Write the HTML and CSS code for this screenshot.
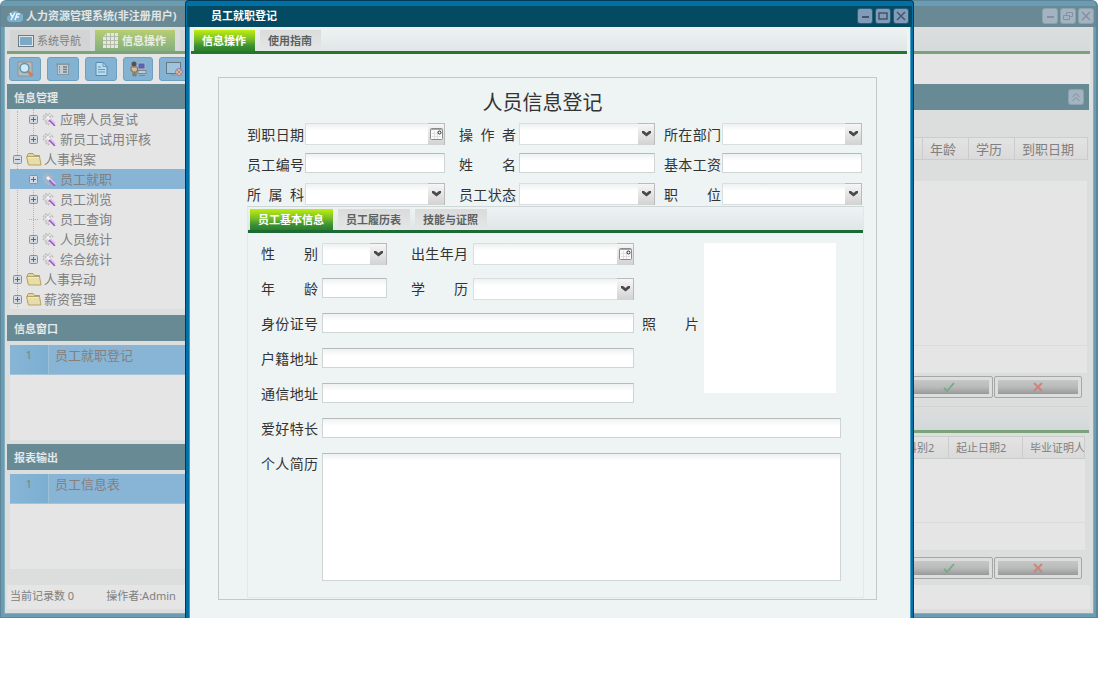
FILE: index.html
```html
<!DOCTYPE html>
<html lang="zh-CN">
<head>
    <meta charset="UTF-8">
    <meta name="viewport" content="width=device-width, initial-scale=1.0">
    <title>人力资源管理系统</title>
    <link rel="stylesheet" href="styles.css">
</head>
<body>
    <!-- shared icons -->
    <svg class="sprite" aria-hidden="true">
        <symbol id="plus" viewBox="0 0 9 9"><rect x=".5" y=".5" width="8" height="8" rx="1" fill="#d3d9e2" stroke="#8791a5"/><path d="M2 4.500h5M4.500 2v5" stroke="#5c6880"/></symbol>
        <symbol id="minus" viewBox="0 0 9 9"><rect x=".5" y=".5" width="8" height="8" rx="1" fill="#d3d9e2" stroke="#8791a5"/><path d="M2 4.500h5" stroke="#5c6880"/></symbol>
        <symbol id="folder" viewBox="0 0 16 13"><path d="M1.500 9.500V2l1-1.500h4.500l1.500 2h5v2.500" fill="#e0d6a0" stroke="#b09a68"/><path d="M.5 3.500h13l1.500 8.500H2.500z" fill="#e6dea8" stroke="#b8a368"/><path d="M2 4.500h11" stroke="#f0ead0"/></symbol>
        <symbol id="wand" viewBox="0 0 14 14"><path d="M1 5l4-4M1 8l7-7M3 10l7-7M4 12l3-3M6 13l2-2M10 5l1-1" stroke="#b9b9b9" stroke-width="1.500" stroke-dasharray="2 1"/><path d="M5 5l3 3" stroke="#f2f2f2" stroke-width="3"/><path d="M8 7l5 5" stroke="#dfbcf0" stroke-width="2"/><path d="M7 8l6 6" stroke="#9a50c4" stroke-width="1.500"/></symbol>
        <symbol id="arrow" viewBox="0 0 9 6"><path d="M0 0h2l2.500 2L7 0h2v2L4.500 5.500 0 2z" fill="#4a4a4a"/></symbol>
        <symbol id="calendar" viewBox="0 0 13 12"><rect x=".5" y=".5" width="12" height="11" rx="1" fill="#fafafa" stroke="#8a8a8a"/><path d="M1 1.500h11" stroke="#a8a8a8"/><path d="M4.500 3v8M7.500 3v8M2 5.500h9M2 8.500h9" stroke="#e0e0e0"/><circle cx="9.500" cy="4.500" r="1.500" fill="#fff" stroke="#222"/></symbol>
        <symbol id="check" viewBox="0 0 12 10"><path d="M1 6l3 3 7-8" fill="none" stroke="#79aa87" stroke-width="1.800"/></symbol>
        <symbol id="cross" viewBox="0 0 12 10"><path d="M2 1l8 8M10 1L2 9" stroke="#cf8379" stroke-width="1.800"/></symbol>
        <symbol id="win-min" viewBox="0 0 14 14"><path d="M4 8h7" stroke="currentColor" stroke-width="2"/></symbol>
        <symbol id="win-max" viewBox="0 0 14 14"><rect x="3" y="4" width="8" height="6" fill="none" stroke="currentColor" stroke-width="1.500"/></symbol>
        <symbol id="win-restore" viewBox="0 0 14 14"><path d="M5.500 6V3.500h6v4H9M2.500 6.500h6v4h-6z" fill="none" stroke="currentColor"/></symbol>
        <symbol id="win-close" viewBox="0 0 14 14"><path d="M3 3l8 8M11 3l-8 8" stroke="currentColor" stroke-width="1.500"/></symbol>
        <symbol id="collapse" viewBox="0 0 14 14"><path d="M3.500 7L7 3.500 10.500 7M3.500 11L7 7.500 10.500 11" fill="none" stroke="currentColor"/></symbol>
    </svg>

    <div class="desktop">
        <!-- main window -->
        <div class="app">
            <header class="titlebar">
                <svg class="logo" width="16" height="14" viewBox="0 0 16 14"><path d="M4 13a3.500 3.500 0 0 1-1-7 5 5 0 0 1 9-2 4.500 4.500 0 0 1 1 9z" fill="#7ab0d2"/><path d="M3 4l2.500 4M8 3.500L4 11M8 11l2-6h3M9 8h3" fill="none" stroke="#eef4f7" stroke-width="1.500"/></svg>
                <span class="titlebar-text">人力资源管理系统(非注册用户)</span>
                <div class="win-buttons">
                    <button type="button" aria-label="最小化"><svg><use href="#win-min"/></svg></button>
                    <button type="button" aria-label="还原"><svg><use href="#win-restore"/></svg></button>
                    <button type="button" aria-label="关闭"><svg><use href="#win-close"/></svg></button>
                </div>
            </header>

            <div class="app-inner">
                <nav class="tabs app-tabs">
                    <button type="button" class="tab"><svg width="16" height="12" viewBox="0 0 16 12"><rect x=".5" y=".5" width="15" height="11" fill="#dfe5e8" stroke="#6f7b84"/><rect x="2" y="2" width="12" height="8" fill="#7da9c6"/></svg>系统导航</button>
                    <button type="button" class="tab active"><svg width="15" height="15" viewBox="0 0 15 15"><path d="M4 0h11v15H0V4z" fill="#e3e8dd"/><path d="M3.500 1v14M7.500 0v15M11.500 0v15M0 3.500h15M0 7.500h15M0 11.500h15" stroke="#b3bcaa"/></svg>信息操作</button>
                    <button type="button" class="tab" aria-label="更多"></button>
                </nav>

                <div class="toolbar">
                    <button type="button" aria-label="查找"><svg width="17" height="17" viewBox="0 0 17 17"><path d="M1 1h14v14H1z" fill="#b9bcbc" stroke="#8e9494"/><circle cx="7.500" cy="7" r="4.500" fill="#d0eaf3" stroke="#5f93ab" stroke-width="1.500"/><path d="M11 10.500l4.500 4.500" stroke="#cf8058" stroke-width="3"/></svg></button>
                    <button type="button" aria-label="列表"><svg width="14" height="14" viewBox="0 0 14 14"><path d="M0 1h14v3H0z" fill="#8f9fa8"/><rect x="1.500" y="2.500" width="11" height="10" fill="#c2ced4" stroke="#8b979e"/><path d="M3 5h1M3 7.500h1M3 10h1M7 5h4M7 7.500h4M7 10h4" stroke="#6d7f89" stroke-width="1.500"/></svg></button>
                    <button type="button" aria-label="文档"><svg width="13" height="14" viewBox="0 0 13 14"><path d="M1 .5h7l4 4v9H1z" fill="#bbdcee" stroke="#568bad"/><path d="M8 .5v4h4M3 5h3M3 7.500h7M3 10h7" fill="none" stroke="#5e9ac1"/></svg></button>
                    <button type="button" aria-label="人员"><svg width="17" height="16" viewBox="0 0 17 16"><path d="M8 2h7v6H8z" fill="#5865ae" stroke="#a7b3d5"/><path d="M8 9.500h8v3H8zM9 14.500h6" fill="#c3cbd0" stroke="#7f878b"/><circle cx="4" cy="3" r="2.500" fill="#5b504c"/><path d="M1 6h6l1 4H6v5H5v-4H4v4H3v-5H1z" fill="#d9bb91" stroke="#827052"/></svg></button>
                    <button type="button" aria-label="显示"><svg width="18" height="15" viewBox="0 0 18 15"><rect x=".5" y=".5" width="14" height="11" fill="#9ec5dd" stroke="#69777e"/><path d="M4 13h6" stroke="#8b989e"/><circle cx="13" cy="10" r="3.500" fill="#d9c184" stroke="#8f78bd"/><path d="M11 8l4 4M15 8l-4 4" stroke="#b7809c" fill="none"/></svg></button>
                </div>

                <div class="app-body">
                    <aside class="sidebar">
                        <h2 class="section-title">信息管理</h2>
                        <ul class="tree">
                            <li class="sub">
                                <ul>
                                    <li><a href="#"><svg class="exp"><use href="#plus"/></svg><svg class="wand"><use href="#wand"/></svg>应聘人员复试</a></li>
                                    <li><a href="#"><svg class="exp"><use href="#plus"/></svg><svg class="wand"><use href="#wand"/></svg>新员工试用评核</a></li>
                                </ul>
                            </li>
                            <li><a href="#"><svg class="exp"><use href="#minus"/></svg><svg class="folder"><use href="#folder"/></svg>人事档案</a>
                                <ul>
                                    <li class="selected"><a href="#"><svg class="exp"><use href="#plus"/></svg><svg class="wand"><use href="#wand"/></svg>员工就职</a></li>
                                    <li><a href="#"><svg class="exp"><use href="#plus"/></svg><svg class="wand"><use href="#wand"/></svg>员工浏览</a></li>
                                    <li><a href="#"><span class="exp leaf"></span><svg class="wand"><use href="#wand"/></svg>员工查询</a></li>
                                    <li><a href="#"><svg class="exp"><use href="#plus"/></svg><svg class="wand"><use href="#wand"/></svg>人员统计</a></li>
                                    <li><a href="#"><svg class="exp"><use href="#plus"/></svg><svg class="wand"><use href="#wand"/></svg>综合统计</a></li>
                                </ul>
                            </li>
                            <li><a href="#"><svg class="exp"><use href="#plus"/></svg><svg class="folder"><use href="#folder"/></svg>人事异动</a></li>
                            <li><a href="#"><svg class="exp"><use href="#plus"/></svg><svg class="folder"><use href="#folder"/></svg>薪资管理</a></li>
                        </ul>

                        <h2 class="section-title">信息窗口</h2>
                        <div class="list">
                            <div class="list-row"><span class="list-no">1</span><span class="list-name">员工就职登记</span></div>
                        </div>

                        <h2 class="section-title">报表输出</h2>
                        <div class="list">
                            <div class="list-row"><span class="list-no">1</span><span class="list-name">员工信息表</span></div>
                        </div>
                    </aside>

                    <main class="content">
                        <div class="section-title content-title">
                            <button type="button" class="collapse-btn" aria-label="收起"><svg><use href="#collapse"/></svg></button>
                        </div>
                        <table class="grid-head staff-head">
                            <tr><th></th><th class="col-age">年龄</th><th class="col-edu">学历</th><th class="col-date">到职日期</th></tr>
                        </table>
                        <div class="grid-body staff-body"></div>
                        <div class="grid-foot"></div>
                        <div class="actions">
                            <button type="button" aria-label="确定"><span><svg><use href="#check"/></svg></span></button>
                            <button type="button" aria-label="取消"><span><svg><use href="#cross"/></svg></span></button>
                        </div>
                        <div class="strip"></div>
                        <table class="grid-head school-head">
                            <tr><th></th><th class="col-dept">科别2</th><th class="col-range">起止日期2</th><th class="col-witness">毕业证明人</th></tr>
                        </table>
                        <div class="grid-body school-body"></div>
                        <div class="grid-foot"></div>
                        <div class="actions">
                            <button type="button" aria-label="确定"><span><svg><use href="#check"/></svg></span></button>
                            <button type="button" aria-label="取消"><span><svg><use href="#cross"/></svg></span></button>
                        </div>
                    </main>
                </div>

                <footer class="status">
                    <span>当前记录数 0</span>
                    <span>操作者:Admin</span>
                </footer>
            </div>
        </div>

        <!-- dialog window -->
        <section class="dialog">
            <header class="titlebar">
                <span class="titlebar-text">员工就职登记</span>
                <div class="win-buttons">
                    <button type="button" aria-label="最小化"><svg><use href="#win-min"/></svg></button>
                    <button type="button" aria-label="最大化"><svg><use href="#win-max"/></svg></button>
                    <button type="button" aria-label="关闭"><svg><use href="#win-close"/></svg></button>
                </div>
            </header>

            <div class="dialog-inner">
                <nav class="tabs dialog-tabs">
                    <button type="button" class="tab active">信息操作</button>
                    <button type="button" class="tab">使用指南</button>
                </nav>

                <form class="form">
                    <h1>人员信息登记</h1>
                    <div class="fields top-fields">
                        <label for="hire-date">到职日期</label>
                        <span class="combo"><input type="text" id="hire-date"><button type="button" aria-label="选择日期"><svg class="cal"><use href="#calendar"/></svg></button></span>
                        <label for="operator">操 作 者</label>
                        <span class="combo"><select id="operator"></select><span class="drop"><svg class="arrow"><use href="#arrow"/></svg></span></span>
                        <label for="dept">所在部门</label>
                        <span class="combo"><select id="dept"></select><span class="drop"><svg class="arrow"><use href="#arrow"/></svg></span></span>

                        <label for="staff-no">员工编号</label>
                        <input type="text" id="staff-no">
                        <label for="staff-name">姓 名</label>
                        <input type="text" id="staff-name">
                        <label for="salary">基本工资</label>
                        <input type="text" id="salary">

                        <label for="unit">所 属 科</label>
                        <span class="combo"><select id="unit"></select><span class="drop"><svg class="arrow"><use href="#arrow"/></svg></span></span>
                        <label for="state">员工状态</label>
                        <span class="combo"><select id="state"></select><span class="drop"><svg class="arrow"><use href="#arrow"/></svg></span></span>
                        <label for="post">职 位</label>
                        <span class="combo"><select id="post"></select><span class="drop"><svg class="arrow"><use href="#arrow"/></svg></span></span>
                    </div>

                    <div class="panel">
                        <nav class="tabs panel-tabs">
                            <button type="button" class="tab active">员工基本信息</button>
                            <button type="button" class="tab">员工履历表</button>
                            <button type="button" class="tab">技能与证照</button>
                        </nav>
                        <div class="fields panel-fields">
                            <label for="sex" class="first">性 别</label>
                            <span class="combo"><select id="sex"></select><span class="drop"><svg class="arrow"><use href="#arrow"/></svg></span></span>
                            <label for="birth" class="second">出生年月</label>
                            <span class="combo"><input type="text" id="birth"><button type="button" aria-label="选择日期"><svg class="cal"><use href="#calendar"/></svg></button></span>
                            <div class="photo" role="img" aria-labelledby="photo-label"></div>

                            <label for="age" class="first">年 龄</label>
                            <input type="text" id="age">
                            <label for="edu" class="second">学 历</label>
                            <span class="combo"><select id="edu"></select><span class="drop"><svg class="arrow"><use href="#arrow"/></svg></span></span>

                            <label for="id-no" class="first">身份证号</label>
                            <input type="text" id="id-no" class="wide">
                            <span class="photo-label" id="photo-label">照 片</span>

                            <label for="home" class="first">户籍地址</label>
                            <input type="text" id="home" class="wide">
                            <label for="mail" class="first">通信地址</label>
                            <input type="text" id="mail" class="wide">
                            <label for="hobby" class="first">爱好特长</label>
                            <input type="text" id="hobby" class="full">
                            <label for="resume" class="first">个人简历</label>
                            <textarea id="resume" class="full"></textarea>
                        </div>
                    </div>
                </form>
            </div>
        </section>
    </div>
</body>
</html>
```

FILE: styles.css
```css
* {
    box-sizing: border-box;
}

body {
    margin: 0;
    background: #fff;
    font-family: "Noto Sans", "Noto Sans CJK SC", sans-serif;
    font-size: 11px;
    line-height: 16px;
    color: #808080;
}

button,
input,
select,
textarea {
    font: inherit;
    color: inherit;
    margin: 0;
    padding: 0;
    border: 0;
    border-radius: 0;
    outline: 0;
}

button {
    cursor: pointer;
}

h1,
h2,
ul {
    margin: 0;
    padding: 0;
    font-size: inherit;
    list-style: none;
}

.sprite {
    display: none;
}

.desktop {
    position: relative;
    overflow: hidden;
}

/* window frame */
.titlebar {
    display: flex;
    align-items: center;
    height: 27px;
    padding: 3px 6px 0;
    font-weight: bold;
}

.titlebar-text {
    white-space: nowrap;
}

.win-buttons {
    display: flex;
    gap: 4px;
    margin-left: auto;
}

.win-buttons button,
.collapse-btn {
    width: 14px;
    height: 14px;
    border-radius: 2px;
}

.win-buttons svg,
.collapse-btn svg {
    display: block;
    width: 14px;
    height: 14px;
}

.app {
    background: #6a9cb4;
    border: solid #5d8799;
    border-width: 1px 2px 1px 1px;
    border-radius: 6px 6px 0 0;
}

.app > .titlebar {
    height: 26px;
    padding: 0 3px 2px 6px;
    color: #e1e6e8;
    background: #698a95;
    border: solid #6a9cb4;
    border-width: 5px 0 0;
    border-radius: 5px 5px 0 0;
}

.logo {
    margin-right: 3px;
}

.app .win-buttons button,
.collapse-btn {
    color: #84919e;
    background: #a4b3c0;
    box-shadow: 0 0 0 1px #8aa3b0;
}

.app-inner {
    margin: 0 2px 3px 3px;
    padding: 0 3px 0 2px;
    background: #dcdedd;
    border: solid #86aebf;
    border-width: 0 1px 1px;
}

/* tabs */
.tabs {
    display: flex;
    align-items: flex-end;
    gap: 5px;
    height: 27px;
    padding: 0 3px;
    background: linear-gradient(#eef2f3, #e0e6e7);
    border-bottom: 3px solid #25762b;
}

.tab {
    display: flex;
    align-items: center;
    justify-content: center;
    height: 21px;
    padding: 0 9px 0 8px;
    font-weight: bold;
    white-space: nowrap;
    color: #5c6262;
    background: linear-gradient(#dadcdc, #e5e6e6);
}

.tab.active {
    color: #fff;
    background: linear-gradient(#bdee10, #76bd25 45%, #3b9135 75%, #2c7d2c);
}

.app-tabs {
    background: linear-gradient(#dcdedd, #d5dadb);
    border-color: #7ba378;
}

.app-tabs .tab {
    font-weight: normal;
    color: #808080;
    background: #d3d5d5;
}

.app-tabs .tab.active {
    color: #e9ede7;
    font-weight: bold;
    background: linear-gradient(#b7cf72, #9cbd7b 50%, #86af80);
}

.app-tabs svg {
    margin-right: 4px;
}

.app-tabs .tab:first-child svg {
    margin-right: 3px;
}

/* main window content */
.toolbar {
    display: flex;
    gap: 6px;
    height: 30px;
    padding: 3px 2px;
    background: #e5e5e5;
}

.toolbar button {
    display: flex;
    align-items: center;
    justify-content: center;
    width: 32px;
    height: 24px;
    background: #83b2d2;
    border: 1px solid #6f9fbd;
    border-radius: 3px;
}

.toolbar button:nth-child(4) {
    width: 30px;
}

.app-body {
    display: flex;
}

.sidebar {
    flex: 0 0 200px;
}

.section-title {
    height: 26px;
    padding: 6px 7px 4px;
    line-height: 16px;
    font-weight: bold;
    color: #e4e8e9;
    background: #688a95;
}

.sidebar .section-title:first-child {
    height: 25px;
}

.tree {
    position: relative;
    height: 200px;
    margin: 0 0 6px 3px;
    background: #e5e5e5;
    font-size: 13px;
    line-height: 20px;
}

.tree::before {
    content: "";
    position: absolute;
    top: 2px;
    bottom: 2px;
    left: 7px;
    border-left: 1px dotted #b3b3b3;
}

.tree ul {
    position: relative;
}

.tree ul::before {
    content: "";
    position: absolute;
    top: 0;
    bottom: 10px;
    left: 23px;
    border-left: 1px dotted #b3b3b3;
}

.tree a {
    position: relative;
    display: flex;
    align-items: center;
    height: 20px;
    padding-left: 3px;
    color: inherit;
    text-decoration: none;
}

.tree ul a {
    padding-left: 19px;
}

.tree .selected {
    background: #88b5d5;
}

.exp {
    width: 9px;
    height: 9px;
    margin-right: 4px;
}

.leaf {
    height: 1px;
    border-top: 1px dotted #b3b3b3;
}

.folder {
    width: 16px;
    height: 13px;
    margin-right: 2px;
}

.wand {
    width: 14px;
    height: 14px;
    margin-right: 4px;
}

.list {
    height: 95px;
    margin: 4px 0 4px 3px;
    background: #e5e5e5;
}

.list-row {
    display: flex;
    height: 30px;
    background: #88b5d5;
    border-bottom: 1px solid #a3c3d8;
}

.list-no {
    width: 39px;
    padding-top: 2px;
    text-align: center;
    background: linear-gradient(90deg, #88b5d5, #7bafd2);
    border-right: 1px solid #9dc0d6;
}

.list-name {
    padding-left: 6px;
    font-size: 13px;
    line-height: 20px;
}

.list-no,
.list-name {
    color: #857f7d;
}

.content {
    flex: 1;
    min-width: 0;
}

.content-title {
    display: flex;
    justify-content: flex-end;
    padding: 6px;
    margin-right: 1px;
}

.grid-head {
    width: calc(100% - 2px);
    height: 22px;
    table-layout: fixed;
    border-collapse: collapse;
    background: linear-gradient(#e3e3e3, #dadada);
}

.grid-head th {
    height: 22px;
    padding: 0 0 0 7px;
    font-weight: normal;
    text-align: left;
    white-space: nowrap;
    overflow: hidden;
    border: 1px solid #cbcdcd;
}

.staff-head {
    margin-top: 27px;
    font-size: 13px;
}

.col-age {
    width: 46px;
}

.col-edu {
    width: 46px;
}

.col-date {
    width: 73px;
}

.col-dept {
    width: 50px;
}

.col-range {
    width: 74px;
}

.col-witness {
    width: 62px;
}

.grid-body,
.grid-foot {
    margin-right: 3px;
    background: #e5e5e5;
    border-bottom: 1px solid #dadcdb;
}

.staff-body {
    height: 165px;
    margin-top: 21px;
}

.grid-foot {
    height: 28px;
}

.actions {
    display: flex;
    justify-content: flex-end;
    gap: 1px;
    margin: 2px 8px 0 0;
}

.actions button {
    width: 88px;
    height: 22px;
    padding: 3px;
    background: #dcdedd;
    border: 1px solid #a5a7a6;
    border-radius: 2px;
}

.actions span {
    display: flex;
    align-items: center;
    justify-content: center;
    height: 14px;
    background: linear-gradient(#c5c6c6, #b9baba 50%, #999);
}

.actions svg {
    width: 12px;
    height: 10px;
}

.strip {
    height: 27px;
    margin: 8px 1px 3px 0;
    background: linear-gradient(#dcdedd, #d2d8d9);
    border: solid #d0d4d4;
    border-width: 1px 0 0;
    border-bottom: 3px solid #7ba378;
}

.school-head,
.school-body,
.school-body + .grid-foot {
    width: calc(100% - 5px);
}

.school-body {
    height: 64px;
}

.school-body ~ .actions {
    margin-top: 6px;
}

.status {
    display: flex;
    gap: 32px;
    height: 24px;
    margin: 6px 0 4px;
    padding: 3px;
    background: #e5e5e5;
}

/* dialog window */
.dialog {
    position: absolute;
    top: 0;
    left: 185px;
    right: 184px;
    bottom: 0;
    display: flex;
    flex-direction: column;
    color: #333;
    background: #0070a6;
    border: solid #003a55;
    border-width: 1px 1px 0;
    border-radius: 4px 4px 0 0;
}

.dialog > .titlebar {
    height: 26px;
    margin: 0 1px;
    padding: 0 4px 2px 24px;
    color: #fff;
    background: #044a62;
    border-top: 5px solid #0070a6;
    border-radius: 5px 5px 0 0;
}

.dialog .win-buttons button {
    color: #40566d;
    background: #829bb8;
    box-shadow: 0 0 0 1px #28607a;
}

.dialog-inner {
    flex: 1;
    margin: 0 2px 0 3px;
    padding: 0 3px 0 1px;
    background: #eef3f4;
    border: solid #4b9fc5;
    border-width: 0 1px;
}

.dialog-tabs {
    padding: 0 3px;
}

/* form */
.form {
    margin: 23px 30px 0 27px;
    padding: 0 12px 1px 28px;
    border: 1px solid #c3c8c9;
}

.form h1 {
    padding: 11px 26px 6px 0;
    font-size: 20px;
    line-height: 28px;
    font-weight: normal;
    text-align: center;
}

.fields {
    display: grid;
    align-items: start;
    font-size: 14px;
}

.fields label,
.photo-label {
    width: 57px;
    line-height: 22px;
    text-align: justify;
    text-align-last: justify;
    justify-self: end;
    margin-right: 4px;
}

.fields input,
.fields select,
.fields textarea {
    display: block;
    width: 100%;
    height: 20px;
    min-width: 0;
    background: linear-gradient(#eff1f1, #fff 7px);
    border: 1px solid #cfd4d4;
    border-top-color: #b7baba;
}

.fields select {
    appearance: none;
}

.combo {
    position: relative;
    display: flex;
}

.fields .combo input,
.fields .combo select {
    height: 22px;
    border-color: #d9dfdf;
}

.combo button,
.drop {
    position: absolute;
    top: 0;
    right: 0;
    bottom: 0;
    display: flex;
    align-items: center;
    justify-content: center;
    width: 17px;
    background: linear-gradient(#f6f6f6, #d2d2d2);
    border: solid #bbb;
    border-width: 1px 1px 0 0;
}

.combo button {
    padding-bottom: 2px;
}

.drop {
    padding-bottom: 1px;
    pointer-events: none;
}

.arrow {
    width: 9px;
    height: 6px;
}

.cal {
    flex: none;
    width: 13px;
    height: 12px;
}

.top-fields {
    grid-template-columns: 58px 140fr 74px 136fr 67px 140fr;
    grid-auto-rows: 30px;
    height: 83px;
    margin-right: 2px;
}

.top-fields label {
    padding-top: 1px;
    margin-right: 1px;
}

.top-fields label:nth-of-type(3n + 2) {
    margin-right: 3px;
}

.panel {
    border: 1px solid #e2e7e8;
    border-top-color: #cfd6d7;
}

.panel-tabs {
    height: 26px;
    padding: 0 2px;
    border-color: #1c6a35;
}

.panel-fields {
    grid-template-columns: 61px 65px 86px 1fr 70px 132px 5px;
    grid-template-rows: repeat(6, 35px) auto;
    padding: 10px 22px 16px 13px;
}

.fields .first {
    grid-column: 1;
}

.fields .second {
    margin-right: 5px;
}

.fields .wide {
    grid-column: 2 / 5;
}

.fields .full {
    grid-column: 2 / -1;
}

.fields textarea {
    height: 128px;
    resize: none;
}

.photo {
    grid-column: 6;
    grid-row: 1 / 6;
    height: 150px;
    background: #fff;
}

.photo-label {
    margin-right: 5px;
}
```
